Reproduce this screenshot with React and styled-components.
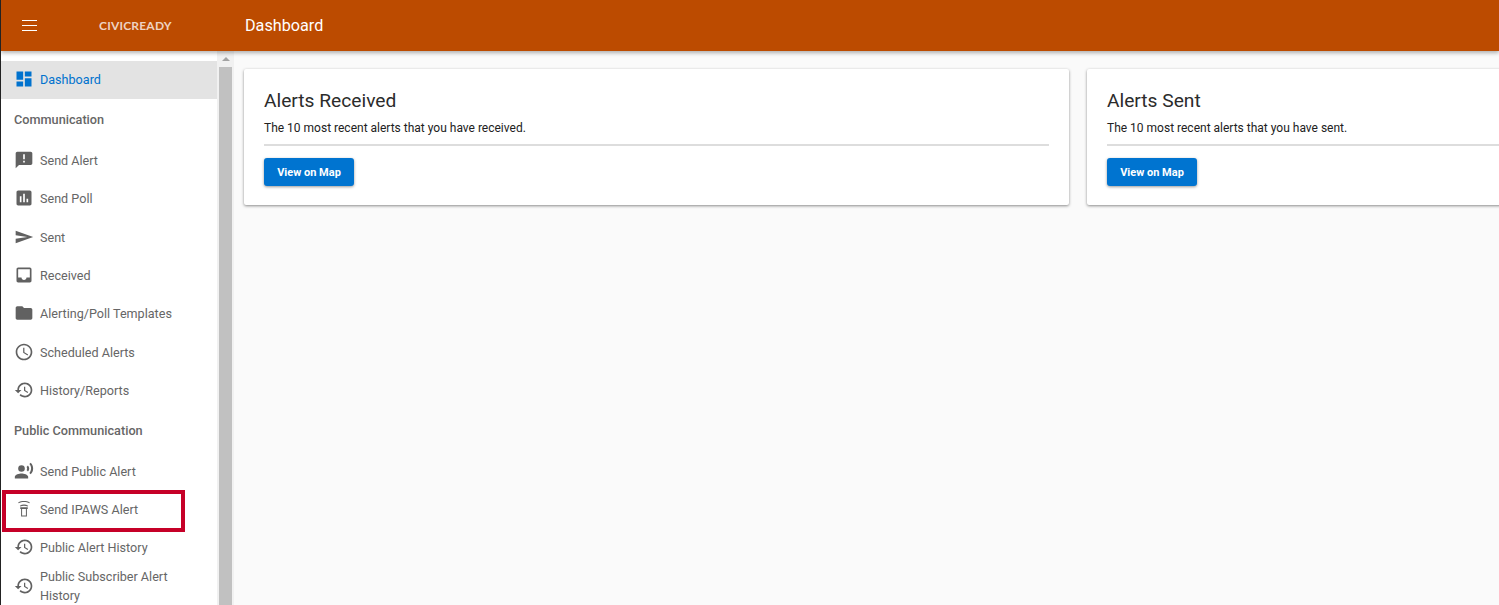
import React from "react";
import styled, { createGlobalStyle } from "styled-components";

const GlobalStyle = createGlobalStyle`
  html, body {
    margin: 0;
    height: 605px;
    overflow: hidden;
    background: #fafafa;
    font-family: Roboto, "Liberation Sans", sans-serif;
  }
  * { box-sizing: border-box; }
`;

// material icon paths
const icons = {
  dashboard: "M3 13h8V3H3v10zm0 8h8v-6H3v6zm10 0h8V11h-8v10zm0-18v6h8V3h-8z",
  alert: "M20 2H4c-1.1 0-1.99.9-1.99 2L2 22l4-4h14c1.1 0 2-.9 2-2V4c0-1.1-.9-2-2-2zm-7 9h-2V5h2v6zm0 4h-2v-2h2v2z",
  poll: "M19 3H5c-1.1 0-2 .9-2 2v14c0 1.1.9 2 2 2h14c1.1 0 2-.9 2-2V5c0-1.1-.9-2-2-2zM9 17H7v-7h2v7zm4 0h-2V7h2v10zm4 0h-2v-4h2v4z",
  send: "M2 19.5L23 12 2 4.5V10l14 2-14 2z",
  inbox: "M19 3H4.99c-1.11 0-1.98.89-1.98 2L3 19c0 1.1.88 2 1.99 2H19c1.1 0 2-.9 2-2V5c0-1.11-.9-2-2-2zm0 12h-4c0 1.66-1.35 3-3 3s-3-1.34-3-3H4.99V5H19v10z",
  folder: "M10 4H4c-1.1 0-1.99.9-1.99 2L2 18c0 1.1.9 2 2 2h16c1.1 0 2-.9 2-2V8c0-1.1-.9-2-2-2h-8l-2-2z",
  schedule: "M11.99 2C6.47 2 2 6.48 2 12s4.47 10 9.99 10C17.52 22 22 17.52 22 12S17.52 2 11.99 2zM12 20c-4.42 0-8-3.58-8-8s3.58-8 8-8 8 3.58 8 8-3.58 8-8 8zm.5-13H11v6l5.25 3.15.75-1.23-4.5-2.67z",
  history: "M13 3c-4.97 0-9 4.03-9 9H1l3.89 3.89.07.14L9 12H6c0-3.87 3.13-7 7-7s7 3.13 7 7-3.13 7-7 7c-1.93 0-3.68-.79-4.94-2.06l-1.42 1.42C8.27 19.99 10.51 21 13 21c4.97 0 9-4.03 9-9s-4.03-9-9-9zm-1 5v5l4.28 2.54.72-1.21-3.5-2.08V8H12z",
  voice: "M9 5a4 4 0 1 0 0 8 4 4 0 0 0 0-8zM9 15c-2.67 0-8 1.34-8 4v2h16v-2c0-2.66-5.33-4-8-4zm7.76-9.64l-1.68 1.69c.84 1.18.84 2.71 0 3.89l1.68 1.69c2.02-2.02 2.02-5.07 0-7.27zM20.07 2l-1.63 1.63c2.77 3.02 2.77 7.56 0 10.74L20.07 16c3.9-3.89 3.91-9.95 0-14z",
  tower: "M7.5 10h9v2h-1v9h-7v-9h-1v-2zm2.2 2v7.8h4.6V12H9.700zM7 8c3-1.700 7-1.700 10 0l-.5 1C14 7.700 10 7.700 7.500 9L7 8zM5 4.200c4-2.300 10-2.300 14 0l-.5 1c-3.700-2-9.300-2-13 0l-.5-1z",
};

const sections = [
  {
    title: "Communication",
    items: [
      { label: "Send Alert", icon: "alert" },
      { label: "Send Poll", icon: "poll" },
      { label: "Sent", icon: "send" },
      { label: "Received", icon: "inbox" },
      { label: "Alerting/Poll Templates", icon: "folder" },
      { label: "Scheduled Alerts", icon: "schedule" },
      { label: "History/Reports", icon: "history" },
    ],
  },
  {
    title: "Public Communication",
    items: [
      { label: "Send Public Alert", icon: "voice" },
      { label: "Send IPAWS Alert", icon: "tower", marked: true },
      { label: "Public Alert History", icon: "history" },
      { label: "Public Subscriber Alert History", icon: "history" },
    ],
  },
];

const cards = [
  { title: "Alerts Received", text: "The 10 most recent alerts that you have received." },
  { title: "Alerts Sent", text: "The 10 most recent alerts that you have sent." },
];

function Icon({ name, size = 20 }) {
  return (
    <svg width={size} height={size} viewBox="0 0 24 24" fill="currentColor">
      <path d={icons[name]} />
    </svg>
  );
}

export default function App() {
  return (
    <Page>
      <GlobalStyle />
      <Header>
        <MenuButton>
          <MenuLine />
          <MenuLine />
          <MenuLine />
        </MenuButton>
        <Logo>CIVICREADY</Logo>
        <PageTitle>Dashboard</PageTitle>
      </Header>
      <Body>
        <Sidebar>
          <Nav>
            <NavItem $active>
              <IconSlot $active><Icon name="dashboard" /></IconSlot>
              Dashboard
            </NavItem>
            {sections.map((section) => (
              <React.Fragment key={section.title}>
                <SectionTitle>{section.title}</SectionTitle>
                {section.items.map((item) => (
                  <NavItem key={item.label} $marked={item.marked}>
                    <IconSlot><Icon name={item.icon} /></IconSlot>
                    <NavLabel>{item.label}</NavLabel>
                  </NavItem>
                ))}
              </React.Fragment>
            ))}
          </Nav>
          <Scrollbar>
            <ScrollArrow />
            <ScrollThumb />
          </Scrollbar>
        </Sidebar>
        <Main>
          {cards.map((card) => (
            <Card key={card.title}>
              <CardTitle>{card.title}</CardTitle>
              <CardText>{card.text}</CardText>
              <MapButton>View on Map</MapButton>
            </Card>
          ))}
        </Main>
      </Body>
    </Page>
  );
}

// styled-components
const Page = styled.div`
  width: 1499px;
  height: 605px;
  display: flex;
  flex-direction: column;
  overflow: hidden;
  border-left: 1px solid #222;
`;

const Header = styled.header`
  position: relative;
  z-index: 2;
  flex: 0 0 51px;
  display: flex;
  align-items: center;
  background: #bc4b00;
  box-shadow: 0 2px 4px rgba(0, 0, 0, 0.3);
  color: #fff;
`;

const MenuButton = styled.div`
  width: 15px;
  margin-left: 21px;
  display: flex;
  flex-direction: column;
  gap: 4px;
`;

const MenuLine = styled.span`
  display: block;
  height: 1px;
  background: #fff;
`;

const Logo = styled.div`
  width: 72px;
  margin-left: 62px;
  font-family: Lato, "Liberation Sans", sans-serif;
  font-size: 12px;
  font-weight: 700;
  letter-spacing: 0.2px;
  white-space: nowrap;
  color: #eed3c2;
`;

const PageTitle = styled.h1`
  margin: 0 0 0 74px;
  font-size: 16.2px;
  font-weight: 400;
  line-height: 51px;
`;

const Body = styled.div`
  flex: 1;
  display: flex;
  min-height: 0;
`;

const Sidebar = styled.aside`
  flex: 0 0 233px;
  display: flex;
  background: #fff;
  overflow: hidden;
`;

const Nav = styled.nav`
  flex: 0 0 216px;
  padding-top: 10px;
`;

const NavItem = styled.div`
  position: relative;
  display: flex;
  align-items: center;
  height: ${(p) => (p.$active ? "38px" : "38.33px")};
  padding: ${(p) => (p.$active ? "0 0 1px 14px" : "0 0 0 14px")};
  font-size: 12.6px;
  line-height: 19px;
  color: ${(p) => (p.$active ? "#0072ce" : "#666")};
  background: ${(p) => (p.$active ? "#e3e3e3" : "transparent")};

  ${(p) =>
    p.$marked &&
    `
    &::after {
      content: "";
      position: absolute;
      box-sizing: border-box;
      left: 1px;
      top: 0;
      width: 183px;
      height: 42px;
      border: 4px solid #c60028;
    }
  `}
`;

const IconSlot = styled.span`
  flex: 0 0 26.5px;
  display: flex;
  margin: -1px 0 0 -1.5px;
  color: ${(p) => (p.$active ? "#0072ce" : "#616161")};
`;

const NavLabel = styled.span`
  width: 150px;
`;

const SectionTitle = styled.div`
  height: 42.3px;
  padding: 12px 0 0 13px;
  font-size: 12.7px;
  font-weight: 500;
  line-height: 18px;
  color: #666;
`;

const Scrollbar = styled.div`
  flex: 0 0 17px;
  display: flex;
  flex-direction: column;
  padding: 0 2px;
  background: #f1f1f1;
`;

const ScrollArrow = styled.div`
  align-self: center;
  margin: 6px 0 6px;
  width: 0;
  height: 0;
  border-left: 4px solid transparent;
  border-right: 4px solid transparent;
  border-bottom: 4px solid #a3a3a3;
`;

const ScrollThumb = styled.div`
  flex: 1;
  background: #c1c1c1;
`;

const Main = styled.main`
  flex: 1;
  display: flex;
  align-items: flex-start;
  gap: 18px;
  padding: 18px 0 0 10px;
  background: #fafafa;
  overflow: hidden;
`;

const Card = styled.section`
  flex: 0 0 825px;
  height: 136px;
  padding: 20px;
  background: #fff;
  border-radius: 2px;
  box-shadow: 0 1px 3px rgba(0, 0, 0, 0.45);
`;

const CardTitle = styled.h2`
  margin: 0;
  font-size: 19.2px;
  font-weight: 400;
  line-height: 24px;
  color: #2b2b2b;
`;

const CardText = styled.p`
  margin: 7px 0 0;
  height: 26px;
  font-size: 12px;
  line-height: 16px;
  color: #212121;
  border-bottom: 2px solid #ddd;
`;

const MapButton = styled.button`
  display: block;
  width: 90px;
  height: 28px;
  margin-top: 12px;
  padding: 0;
  border: none;
  border-radius: 3px;
  background: #0074d0;
  box-shadow: 0 1px 3px rgba(0, 0, 0, 0.4);
  color: #fff;
  font-family: inherit;
  font-size: 11px;
  font-weight: 700;
`;
